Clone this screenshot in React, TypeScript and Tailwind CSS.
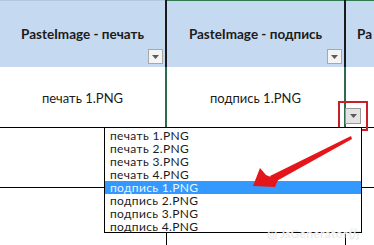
import React from 'react';

const items = [
  'печать 1.PNG',
  'печать 2.PNG',
  'печать 3.PNG',
  'печать 4.PNG',
  'подпись 1.PNG',
  'подпись 2.PNG',
  'подпись 3.PNG',
  'подпись 4.PNG',
];

function FilterButton({ big = false }: { big?: boolean }) {
  return (
    <div
      className={
        big
          ? 'w-[16px] h-[16px] bg-[#e4e4e4] border border-[#9a9a9a] flex items-center justify-center'
          : 'w-[15px] h-[15px] bg-[#f4f4f4] border border-[#a8a8a8] flex items-center justify-center'
      }
    >
      <svg width="7" height="4" viewBox="0 0 7 4">
        <polygon points="0,0 7,0 3.5,4" fill="#5a5a5a" />
      </svg>
    </div>
  );
}

function HeaderCell({ title, active }: { title: string; active?: boolean }) {
  return (
    <div className="relative bg-[#c5d9f1] border-r-2 border-r-[#1a1a1a] flex flex-col">
      <div className={active ? 'h-px bg-[#2f7a4f]' : 'h-px bg-[#b3c6de]'} />
      <div className="flex-1 flex items-center justify-center text-[13.5px] font-bold text-[#1b1b1b] whitespace-nowrap">
        <span className="mt-[1px]">{title}</span>
      </div>
      <div className="absolute right-[2px] bottom-[3px]">
        <FilterButton />
      </div>
    </div>
  );
}

export default function App() {
  return (
    <div className="relative w-[374px] h-[245px] overflow-hidden bg-white font-['Lato','Liberation_Sans',sans-serif]">
      <div className="grid grid-cols-[167px_179px_1fr] grid-rows-[67px_61px_60px_60px]">
        <HeaderCell title="PasteImage - печать" />
        <HeaderCell title="PasteImage - подпись" active />
        <div className="bg-[#c5d9f1] flex flex-col overflow-hidden">
          <div className="h-px bg-[#2f7a4f]" />
          <div className="flex-1 flex items-center pl-[11px] text-[13.5px] font-bold text-[#1b1b1b] whitespace-nowrap">
            <span className="mt-[1px]">Pa</span>
          </div>
        </div>

        <div className="border-b border-black border-r-2 border-r-[#2f6b4c] flex items-center justify-center text-[13px] text-[#1b1b1b]">
          <span className="mt-[4px]">печать 1.PNG</span>
        </div>
        <div className="border-b border-black border-r-2 border-r-[#2f6b4c] flex items-center justify-center text-[13px] text-[#1b1b1b]">
          <span className="mt-[4px]">подпись 1.PNG</span>
        </div>
        <div className="border-b border-black" />

        <div className="border-b border-r border-black" />
        <div className="border-b border-r border-black" />
        <div className="border-b border-black" />

        <div className="border-b border-r border-black" />
        <div className="border-b border-r border-black" />
        <div className="border-b border-black" />
      </div>

      {/* validation dropdown button with red frame */}
      <div className="absolute left-[338px] top-[101px] w-[30px] h-[30px] border-2 border-[#c8202a] flex items-center justify-center">
        <FilterButton big />
      </div>

      {/* opened list */}
      <div className="absolute left-[104px] top-[127px] w-[258px] h-[106px] bg-white border border-black pt-[1px] text-[12px] leading-[13px] tracking-[0.35px] text-[#1b1b1b]">
        {items.map((it, i) => (
          <div
            key={it}
            className={
              'h-[13px] pl-[5px] whitespace-nowrap overflow-hidden ' +
              (i === 4 ? 'bg-[#3399ff] text-[#eaf4ff]' : '')
            }
          >
            {it}
          </div>
        ))}
      </div>

      {/* red arrow */}
      <svg className="absolute left-0 top-0" width="374" height="245" viewBox="0 0 374 245">
        <polygon points="351,136 352,139 273,183 270,176" fill="#e3161b" />
        <polygon points="253,186 260,168 266,175 278,180 275,187" fill="#e3161b" />
      </svg>

      <div className="absolute right-[14px] bottom-[2px] text-[12px] text-[#ececec] font-bold tracking-wide">
        ◎ JsGenerator仿
      </div>
    </div>
  );
}
